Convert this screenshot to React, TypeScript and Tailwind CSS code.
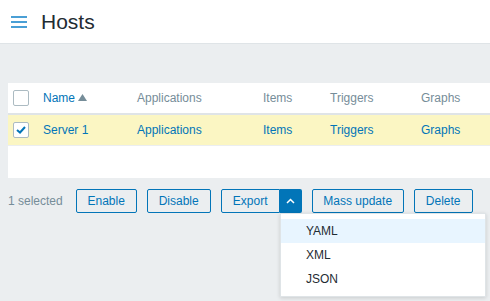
export default function App() {
  const cols = ["w-[94px]", "w-[126px]", "w-[67px]", "w-[91px]", "flex-1"];
  const heads = ["Applications", "Items", "Triggers", "Graphs"];
  return (
    <div className="w-[490px] h-[301px] bg-[#ebeef0] overflow-hidden relative font-['Liberation_Sans',Arial,sans-serif]">
      {/* Header */}
      <div className="h-[44px] bg-white border-b border-[#dfe4e7] flex items-center">
        <svg className="ml-[11px] mt-[1px]" width="16" height="14" viewBox="0 0 16 14">
          <rect x="0" y="1" width="16" height="2" fill="#4a9fd5" />
          <rect x="0" y="6" width="16" height="2" fill="#4a9fd5" />
          <rect x="0" y="11" width="16" height="2" fill="#4a9fd5" />
        </svg>
        <h1 className="ml-[14px] text-[21px] text-[#1f2c33] leading-none">Hosts</h1>
      </div>

      {/* Table */}
      <div className="ml-[8px] mt-[39px] bg-white text-[12px]">
        <div className="h-[32px] pb-[1px] flex items-center border-b-2 border-[#dfe4e7]">
          <div className="w-[35px] pl-[5px]">
            <div className="w-[16px] h-[16px] border border-[#acbbc2] rounded-[2px] bg-white" />
          </div>
          <div className={`${cols[0]} text-[#0275b8] flex items-center gap-[3px]`}>
            Name
            <svg width="9" height="7" viewBox="0 0 9 7"><path d="M0 7 L4.5 0 L9 7 Z" fill="#768d99" /></svg>
          </div>
          {heads.map((h, i) => (
            <div key={h} className={`${cols[i + 1]} text-[#768d99]`}>{h}</div>
          ))}
        </div>
        <div className="h-[31px] flex items-center bg-[#fbf6c3] border-b border-[#ebeef0]">
          <div className="w-[35px] pl-[5px]">
            <div className="w-[16px] h-[16px] border border-[#acbbc2] rounded-[2px] bg-white flex items-center justify-center">
              <svg width="10" height="8" viewBox="0 0 10 8"><path d="M1 4 L4 6.5 L9 1" stroke="#0275b8" strokeWidth="2" fill="none" /></svg>
            </div>
          </div>
          <div className={`${cols[0]} text-[#0275b8]`}>Server 1</div>
          {heads.map((h, i) => (
            <div key={h} className={`${cols[i + 1]} text-[#0275b8]`}>{h}</div>
          ))}
        </div>
        <div className="h-[32px]" />
      </div>

      {/* Action bar */}
      <div className="mt-[11px] ml-[8px] flex items-center text-[12px]">
        <span className="text-[#768d99] mr-[13px]">1 selected</span>
        <button className="h-[24px] w-[61px] border border-[#0275b8] rounded-[2px] text-[#0275b8] mr-[10px]">Enable</button>
        <button className="h-[24px] w-[64px] border border-[#0275b8] rounded-[2px] text-[#0275b8] mr-[10px]">Disable</button>
        <div className="flex mr-[10px]">
          <button className="h-[24px] w-[59px] border border-[#0275b8] rounded-l-[2px] text-[#0275b8]">Export</button>
          <button className="h-[24px] w-[22px] bg-[#0275b8] rounded-r-[2px] flex items-center justify-center">
            <svg width="9" height="6" viewBox="0 0 9 6"><path d="M1 5 L4.5 1.5 L8 5" stroke="white" strokeWidth="1.5" fill="none" /></svg>
          </button>
        </div>
        <button className="h-[24px] w-[92px] border border-[#0275b8] rounded-[2px] text-[#0275b8] mr-[10px]">Mass update</button>
        <button className="h-[24px] w-[59px] border border-[#0275b8] rounded-[2px] text-[#0275b8]">Delete</button>
      </div>

      {/* Dropdown */}
      <div className="absolute left-[280px] top-[213px] w-[206px] bg-white border border-[#dfe4e7] shadow-[0_1px_4px_rgba(0,0,0,0.15)] py-[5px] text-[12px] text-[#1f2c33]">
        <div className="h-[24px] pl-[25px] flex items-center bg-[#e8f5ff]">YAML</div>
        <div className="h-[24px] pl-[25px] flex items-center">XML</div>
        <div className="h-[24px] pl-[25px] flex items-center">JSON</div>
      </div>
    </div>
  );
}
